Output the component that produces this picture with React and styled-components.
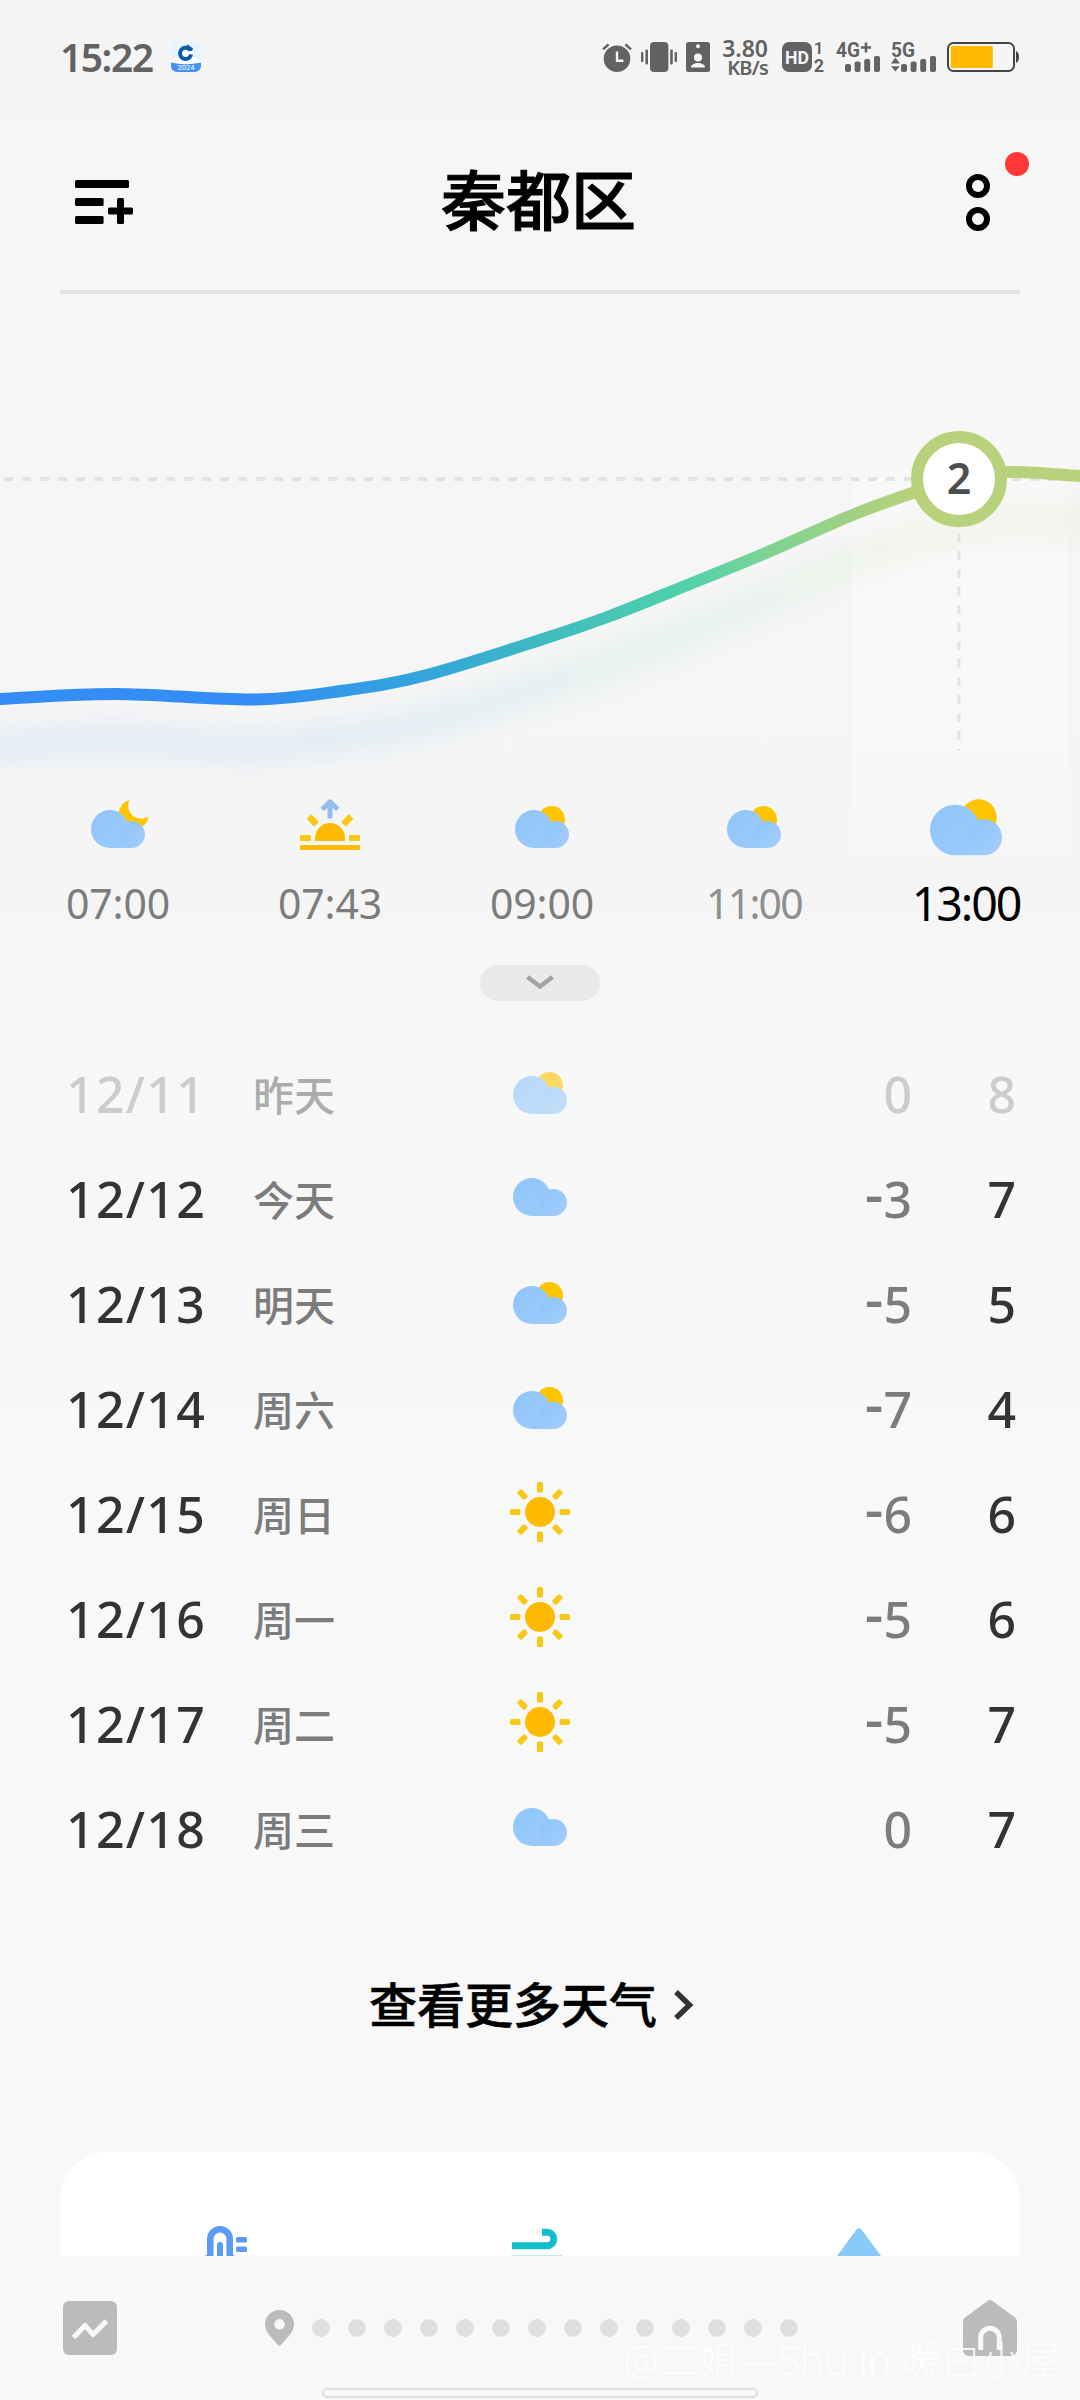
import styled, { createGlobalStyle } from "styled-components";

const hours = [
    { time: '07:00', icon: 'moon' },
    { time: '07:43', icon: 'sunrise' },
    { time: '09:00', icon: 'partly' },
    { time: '11:00', icon: 'partly', dim: true },
    { time: '13:00', icon: 'partly', active: true },
]

const days = [
    { date: '12/11', day: '昨天', icon: 'partly', low: '0', high: '8', past: true },
    { date: '12/12', day: '今天', icon: 'cloud', low: '-3', high: '7' },
    { date: '12/13', day: '明天', icon: 'partly', low: '-5', high: '5' },
    { date: '12/14', day: '周六', icon: 'partly', low: '-7', high: '4' },
    { date: '12/15', day: '周日', icon: 'sun', low: '-6', high: '6' },
    { date: '12/16', day: '周一', icon: 'sun', low: '-5', high: '6' },
    { date: '12/17', day: '周二', icon: 'sun', low: '-5', high: '7' },
    { date: '12/18', day: '周三', icon: 'cloud', low: '0', high: '7' },
]

const curve = [
    [-80, 703], [0, 699], [115, 694], [255, 699.5], [345, 690.5], [425, 675.5], [540, 640], [610, 616],
    [690, 584], [767, 552.5], [850, 516], [914, 492.5], [959, 479], [1007, 472], [1080, 476], [1150, 481],
]

// catmull-rom to bezier
const toPath = (pts) => {
    let d = `M${pts[0][0]} ${pts[0][1]}`;
    for (let i = 0; i < pts.length - 1; i++) {
        const p0 = pts[i - 1] || pts[i];
        const p1 = pts[i];
        const p2 = pts[i + 1];
        const p3 = pts[i + 2] || p2;
        d += `C${p1[0] + (p2[0] - p0[0]) / 6} ${p1[1] + (p2[1] - p0[1]) / 6} ${p2[0] - (p3[0] - p1[0]) / 6} ${p2[1] - (p3[1] - p1[1]) / 6} ${p2[0]} ${p2[1]}`;
    }
    return d;
}

function IconDefs() {
    return (
        <StyledDefs width="0" height="0">
            <defs>
                <linearGradient id="puff" x1="0" y1="0" x2="1" y2="1">
                    <stop offset="0.3" stopColor="#92c7fb" />
                    <stop offset="1" stopColor="#a6cdfb" />
                </linearGradient>
                <linearGradient id="cloudBody" x1="0" y1="0" x2="1" y2="1">
                    <stop offset="0" stopColor="#8fc5fb" />
                    <stop offset="1" stopColor="#9dcbfb" />
                </linearGradient>
            </defs>
        </StyledDefs>
    )
}

function Cloud({ dy = 0 }) {
    return (
        <g transform={`translate(0 ${dy})`}>
            <path d="M22 14a19 19 0 1 0 0 38h21V33L37 22A19 19 0 0 0 22 14z" fill="url(#cloudBody)" />
            <circle cx="43.5" cy="38.5" r="13.5" fill="url(#puff)" />
        </g>
    )
}

function WeatherIcon({ type, size = 60 }) {
    return (
        <StyledIcon width={size} height={size} viewBox="0 0 60 60">
            {type === 'partly' && <circle cx="39.5" cy="23.5" r="13.5" fill="#ffc400" />}
            {type === 'moon' && <path d="M41.5 4A15 15 0 1 0 60.5 20.5A13 13 0 0 1 41.5 4z" fill="#ffc400" />}
            {['partly', 'moon'].includes(type) && <Cloud />}
            {type === 'cloud' && <Cloud dy={-3} />}
            {type === 'sun' && (
                <>
                    <circle cx="30" cy="30" r="15" fill="#ffb900" />
                    {[0, 45, 90, 135, 180, 225, 270, 315].map(deg => (
                        <rect key={deg} x="27" y="0" width="6" height="10.5" rx="1.6" fill="#f5c916" transform={`rotate(${deg} 30 30)`} />
                    ))}
                </>
            )}
            {type === 'sunrise' && (
                <>
                    <path d="M15 45v-3a15 15 0 0 1 30 0v3z" fill="#ffb900" />
                    <rect x="0" y="49" width="60" height="5" rx="1" fill="#fdba0a" />
                    <g fill="#f5c916">
                        <rect x="0" y="39" width="11" height="6" rx="1" />
                        <rect x="49" y="39" width="11" height="6" rx="1" />
                        <rect x="7" y="21" width="11" height="6.6" rx="1" transform="rotate(45 12.5 24.6)" />
                        <rect x="42" y="21" width="11" height="6.6" rx="1" transform="rotate(-45 47.5 24.6)" />
                    </g>
                    <path d="M30 22.5V7M22.200 13.500L30 5.800L37.800 13.500" fill="none" stroke="#94bcec" strokeWidth="5" strokeLinejoin="round" />
                </>
            )}
        </StyledIcon>
    )
}

function StatusBar() {
    return (
        <StyledStatus>
            <Clock>15:22</Clock>
            <svg width="30" height="30" viewBox="0 0 30 30">
                <rect width="30" height="30" rx="6" fill="#e6f4ff" />
                <path d="M0 19Q15 8 30 19V24H0z" fill="#fff" />
                <path d="M0 20.5Q15 24 30 20.5V24a6 6 0 0 1-6 6H6a6 6 0 0 1-6-6z" fill="#4592f0" />
                <circle cx="14.6" cy="11.3" r="5.6" fill="none" stroke="#0a5aa8" strokeWidth="4" />
                <path d="M17.500 9.500L23 8v5l-5-1z" fill="#fff" />
                <path d="M16 3.400l5.500 4.400" stroke="#0a5aa8" strokeWidth="2.400" />
                <path d="M14.600 7.400l3.600 3.800-3.600 3.800-3.600-3.800z" fill="#fff" />
                <text x="15" y="28" fontSize="7.600" textAnchor="middle" fill="#fff" fontFamily="Roboto, sans-serif">2024</text>
            </svg>
            <StatusIcons>
                <svg width="30" height="30" viewBox="0 0 30 30">
                    <circle cx="15" cy="16.700" r="13.300" fill="#626262" />
                    <path d="M1 7.400L6.600 2.400M29 7.400L23.400 2.400" stroke="#626262" strokeWidth="2.600" />
                    <path d="M15 9.500v9.200h6.400" fill="none" stroke="#f5f5f5" strokeWidth="2.400" />
                </svg>
                <svg width="36" height="30" viewBox="0 0 36 30" fill="#626262">
                    <rect x="9" width="18.400" height="30" rx="4" />
                    <rect x="0" y="10" width="2.400" height="10" rx="1" />
                    <rect x="4.400" y="7.500" width="2.600" height="15" rx="1" />
                    <rect x="29.200" y="7.500" width="2.600" height="15" rx="1" />
                    <rect x="33.600" y="10" width="2.400" height="10" rx="1" />
                </svg>
                <svg width="24" height="30" viewBox="0 0 24 30">
                    <rect width="24" height="30" rx="2.500" fill="#626262" />
                    <g fill="#f5f5f5">
                        <circle cx="12" cy="4.300" r="2" />
                        <circle cx="12" cy="15.400" r="4" />
                        <path d="M5 25.400c0-6 14-6 14 0z" />
                    </g>
                </svg>
                <Speed>
                    <SpeedValue>3.80</SpeedValue>
                    <SpeedUnit>KB/s</SpeedUnit>
                </Speed>
                <StatusSvg width="43" height="30" viewBox="0 0 43 30">
                    <rect width="30" height="30" rx="7" fill="#626262" />
                    <text x="3" y="21.600" fontSize="19" fontWeight="700" fill="#f5f5f5" textLength="24" lengthAdjust="spacingAndGlyphs">HD</text>
                    <text x="36.500" y="12" fontSize="17" fontWeight="600" textAnchor="middle" fill="#626262">1</text>
                    <text x="37" y="30" fontSize="18" fontWeight="700" textAnchor="middle" fill="#626262">2</text>
                </StatusSvg>
                <StatusSvg width="44" height="30" viewBox="0 0 44 30" fill="#626262">
                    <text x="0" y="14.600" fontSize="20.500" fontWeight="700" textLength="24" lengthAdjust="spacingAndGlyphs">4G</text>
                    <path d="M25 5.500h10M30 0.500v10" stroke="#626262" strokeWidth="2.600" />
                    <rect x="9" y="22" width="6" height="8" rx="2" />
                    <rect x="18.600" y="19.600" width="6" height="10.400" rx="2" />
                    <rect x="28.200" y="17" width="6" height="13" rx="2" />
                    <rect x="38" y="14" width="6" height="16" rx="2" />
                </StatusSvg>
                <StatusSvg width="45" height="30" viewBox="0 0 45 30" fill="#626262">
                    <text x="0" y="14.600" fontSize="20.500" fontWeight="700" textLength="24" lengthAdjust="spacingAndGlyphs">5G</text>
                    <path d="M4.400 15.600l4.600 6H0zM4.400 29.600l4.400-5.400H0z" />
                    <rect x="10" y="22" width="6" height="8" rx="2" />
                    <rect x="19.600" y="19.600" width="6" height="10.400" rx="2" />
                    <rect x="29.200" y="17" width="6" height="13" rx="2" />
                    <rect x="39" y="14" width="6" height="16" rx="2" />
                </StatusSvg>
                <svg width="72" height="30" viewBox="0 0 72 30">
                    <rect x="1" y="1" width="66" height="28" rx="5.500" fill="none" stroke="#444" strokeWidth="2" />
                    <rect x="3.800" y="4" width="42" height="22" rx="1.500" fill="#ffb900" />
                    <path d="M69 9c4 1.500 4 10.500 0 12z" fill="#444" />
                </svg>
            </StatusIcons>
        </StyledStatus>
    )
}

function Header() {
    return (
        <StyledHeader>
            <svg width="58" height="44" viewBox="0 0 58 44">
                <rect x="0" y="0" width="54" height="8" rx="1.500" />
                <rect x="0" y="18" width="28.600" height="8" rx="1.500" />
                <rect x="0" y="36" width="28.600" height="8" rx="1.500" />
                <rect x="33" y="27.500" width="25" height="7" rx="1.500" />
                <rect x="42" y="18" width="7" height="26" rx="1.500" />
            </svg>
            <Title>秦都区</Title>
            <MenuButton>
                <svg width="24" height="57" viewBox="0 0 24 57" fill="none" stroke="#000" strokeWidth="6">
                    <circle cx="12" cy="12" r="9" />
                    <circle cx="12" cy="45" r="9" />
                </svg>
                <RedDot />
            </MenuButton>
        </StyledHeader>
    )
}

function TempChart() {
    const d = toPath(curve);
    return (
        <StyledChart width="1080" height="496" viewBox="0 294 1080 496">
            <defs>
                <linearGradient id="temp" gradientUnits="userSpaceOnUse" x1="0" y1="0" x2="1080" y2="0">
                    <stop offset="0.24" stopColor="#348df5" />
                    <stop offset="0.315" stopColor="#3399e8" />
                    <stop offset="0.4" stopColor="#33a6da" />
                    <stop offset="0.5" stopColor="#3fbac0" />
                    <stop offset="0.635" stopColor="#50d2aa" />
                    <stop offset="0.71" stopColor="#7dd394" />
                    <stop offset="0.79" stopColor="#a0d182" />
                    <stop offset="0.84" stopColor="#b7d27a" />
                </linearGradient>
                <filter id="soft" filterUnits="userSpaceOnUse" x="-100" y="400" width="1300" height="420">
                    <feGaussianBlur stdDeviation="12" />
                </filter>
            </defs>
            <path d={d} transform="translate(0 47)" fill="none" stroke="url(#temp)" strokeWidth="32" opacity="0.095" filter="url(#soft)" />
            <path d="M4 479H1080" stroke="#e3e3e3" strokeWidth="4" strokeDasharray="9 9" />
            <path d="M959 533V751" stroke="#e3e3e3" strokeWidth="3" strokeDasharray="9 9" />
            <path d={d} fill="none" stroke="url(#temp)" strokeWidth="12" />
            <circle cx="959" cy="479" r="42" fill="#fff" stroke="#b7d27a" strokeWidth="12" />
            <text x="959" y="493.500" fontSize="43" fontWeight="600" textAnchor="middle" fill="#4d4d4d">2</text>
        </StyledChart>
    )
}

function DayRow({ item }) {
    const below = item.low.startsWith('-');
    return (
        <StyledRow>
            <DateText $past={item.past}>{item.date}</DateText>
            <DayText $past={item.past}>{item.day}</DayText>
            <IconCell $past={item.past}><WeatherIcon type={item.icon} /></IconCell>
            <LowText $past={item.past}>
                {below && <Minus>-</Minus>}
                {item.low.replace('-', '')}
            </LowText>
            <HighText $past={item.past}>{item.high}</HighText>
        </StyledRow>
    )
}

function BottomBar() {
    return (
        <StyledBottom>
            <svg width="54" height="54" viewBox="0 0 54 54">
                <rect width="54" height="54" rx="6" fill="#bbb" />
                <path d="M10.500 36.500L22 24.500l8 9L43.500 20" fill="none" stroke="#f8f8f8" strokeWidth="5" strokeLinejoin="round" />
            </svg>
            <Pager>
                <svg width="29" height="36" viewBox="0 0 29 36">
                    <path d="M14.500 0A14.500 14.500 0 0 1 29 14.500C29 23 20 29.500 16 35q-1.500 1.500-3 0C9 29.500 0 23 0 14.500A14.500 14.500 0 0 1 14.500 0z" fill="#bbb" />
                    <circle cx="14.500" cy="14.300" r="5.300" fill="#f8f8f8" />
                </svg>
                {Array.from({ length: 14 }, (_, i) => <PageDot key={i} />)}
            </Pager>
            <HomeIcon width="54" height="56" viewBox="0 0 54 56">
                <path d="M24.500 1q2.500-2 5 0L52 17.500q2 1.500 2 4V50a6 6 0 0 1-6 6H6a6 6 0 0 1-6-6V21.500q0-2.500 2-4z" fill="#bbb" />
                <path d="M17.700 50V37.500a9.300 9.300 0 0 1 18.600 0V50" fill="none" stroke="#f8f8f8" strokeWidth="5" />
            </HomeIcon>
            <Watermark>@二姐—Shu in 暖白小屋</Watermark>
            <GestureBar />
        </StyledBottom>
    )
}

export default function App() {
    return (
        <Page>
            <GlobalStyle />
            <IconDefs />
            <StatusBar />
            <Header />
            <Hourly>
                <Highlight />
                <TempChart />
                <HourList>
                    {hours.map(hour => (
                        <Hour key={hour.time}>
                            <HourIcon><WeatherIcon type={hour.icon} size={hour.active ? 80 : 60} /></HourIcon>
                            <HourLabel $active={hour.active} $dim={hour.dim}>{hour.time}</HourLabel>
                        </Hour>
                    ))}
                </HourList>
            </Hourly>
            <ExpandPill>
                <svg width="28" height="16" viewBox="0 0 28 16">
                    <path d="M1.500 2L14 11.500L26.500 2" fill="none" stroke="#a2a4a3" strokeWidth="4.500" />
                </svg>
            </ExpandPill>
            <DayList>
                {days.map(item => <DayRow key={item.date} item={item} />)}
            </DayList>
            <MoreLink>
                查看更多天气
                <svg width="20" height="32" viewBox="0 0 20 32">
                    <path d="M2 3L15.500 16L2 29" fill="none" stroke="#333" strokeWidth="5.400" />
                </svg>
            </MoreLink>
            <Card>
                <svg width="44" height="30" viewBox="0 0 44 30" fill="#5b9bf5">
                    <path d="M5.300 30V13a9.700 9.700 0 0 1 19.400 0V30" fill="none" stroke="#5b9bf5" strokeWidth="6.600" />
                    <path d="M0 30l3-2h24l3 2zM12 30V19a3 3 0 0 1 6 0v11z" />
                    <path d="M8.600 26h3.400v4H8.600zM18 26h3.400v4H18z" fill="#fff" />
                    <rect x="31" y="11" width="11" height="5.500" rx="1.500" />
                    <rect x="31" y="20.500" width="11" height="5.500" rx="1.500" />
                </svg>
                <WindIcon width="52" height="30" viewBox="0 0 52 30">
                    <path d="M1 19.700H36a6.500 6.500 0 0 0 0-13.500H31" fill="none" stroke="#12bfc9" strokeWidth="7" />
                    <rect x="0" y="29" width="51" height="1" fill="#c3e9eb" />
                </WindIcon>
                <svg width="46" height="30" viewBox="0 0 46 30">
                    <path d="M1 30L20.500 3.500q2.500-3 5 0L45 30z" fill="#88cbfb" />
                </svg>
            </Card>
            <BottomBar />
        </Page>
    )
}

const GlobalStyle = createGlobalStyle`
    body {
        margin: 0;
        background: #f8f8f8;
        font-family: "Noto Sans", "Noto Sans CJK SC", sans-serif;
    }
    * {
        box-sizing: border-box;
    }
    svg {
        display: block;
        flex-shrink: 0;
    }
`

const Page = styled.div`
    position: relative;
    display: flex;
    flex-direction: column;
    width: 1080px;
    height: 2400px;
    overflow: hidden;
    background: linear-gradient(#f4f4f4 0, #f5f5f5 100px, #f5f7f6 240px, #f6f6f6 420px, #f5f5f5 900px, #f6f8f7 1040px, #f7f7f7 1180px, #f7f7f7 1380px, #f7f9f8 1470px, #f8f8f8 1600px);
`

const StyledDefs = styled.svg`
    position: absolute;
`

const StyledIcon = styled.svg`
    overflow: visible;
`

const StyledStatus = styled.div`
    display: flex;
    align-items: center;
    height: 114px;
    padding: 0 61px 0 60px;
`

const Clock = styled.span`
    width: 111px;
    font-size: 39px;
    font-weight: 600;
    line-height: 48px;
    letter-spacing: -1.5px;
    color: #626262;
`

const StatusIcons = styled.div`
    display: flex;
    flex: 1;
    justify-content: flex-end;
    align-items: center;
    & > svg + svg {
        margin-left: 9px;
    }
    & > svg:nth-last-child(-n + 3) {
        margin-left: 11px;
    }
`

const StatusSvg = styled.svg`
    overflow: visible;
    font-family: Roboto, sans-serif;
`

const Speed = styled.div`
    display: flex;
    flex-direction: column;
    align-items: flex-end;
    width: 58px;
    margin-right: 14px;
    color: #626262;
    font-weight: 600;
`

const SpeedValue = styled.span`
    font-size: 23px;
    line-height: 20px;
`

const SpeedUnit = styled.span`
    font-size: 20px;
    line-height: 19px;
    letter-spacing: -0.8px;
`

const StyledHeader = styled.header`
    display: flex;
    align-items: center;
    justify-content: space-between;
    height: 180px;
    margin: 0 60px;
    padding: 0 30px 0 15px;
    border-bottom: 4px solid #e1e3e2;
`

const Title = styled.h1`
    margin: 0 22px 4px 0;
    font-size: 65px;
    font-weight: 500;
    line-height: 80px;
    color: #000;
    -webkit-text-stroke: 1px #000;
`

const MenuButton = styled.div`
    position: relative;
`

const RedDot = styled.span`
    position: absolute;
    top: -22px;
    left: 39px;
    width: 24px;
    height: 24px;
    border-radius: 50%;
    background: #ff3838;
`

const Hourly = styled.section`
    position: relative;
`

/* column behind the selected hour */
const Highlight = styled.div`
    position: absolute;
    top: 68px;
    left: 851px;
    width: 216px;
    height: 493px;
    background: linear-gradient(rgba(255, 255, 255, 0.08), rgba(255, 255, 255, 0.35) 52%, rgba(255, 255, 255, 0.35) 70%, rgba(255, 255, 255, 0.1));
`

const StyledChart = styled.svg`
    position: relative;
`

const HourList = styled.div`
    position: relative;
    display: grid;
    grid-template-columns: repeat(5, 212px);
    padding: 6px 0 0 12px;
`

const Hour = styled.div`
    display: flex;
    flex-direction: column;
    align-items: center;
`

const HourIcon = styled.div`
    display: flex;
    align-items: center;
    justify-content: center;
    height: 60px;
`

const HourLabel = styled.span`
    margin-top: 23px;
    font-size: ${({ $active }) => ($active ? '46.5px' : '41px')};
    line-height: 48px;
    letter-spacing: ${({ $active, $dim }) => ($active ? '-2.1px' : $dim ? '-1.8px' : '-0.2px')};
    color: ${({ $active, $dim }) => ($active ? '#000' : $dim ? '#8f8f8f' : '#7c7c7c')};
`

const ExpandPill = styled.div`
    display: flex;
    align-items: center;
    justify-content: center;
    align-self: center;
    width: 120px;
    height: 36px;
    margin-top: 38px;
    border-radius: 18px;
    background: #e8eae9;
`

const DayList = styled.div`
    margin-top: 41px;
`

const StyledRow = styled.div`
    display: grid;
    grid-template-columns: 187px 257px 60px 1fr 104px;
    align-items: center;
    height: 105px;
    padding: 0 64px 0 66px;
`

const DateText = styled.span`
    margin-top: -2px;
    font-size: 50px;
    font-weight: 500;
    line-height: 60px;
    letter-spacing: 1.3px;
    color: ${({ $past }) => ($past ? '#cbcdcc' : '#333')};
`

const DayText = styled.span`
    font-size: 41px;
    font-weight: 500;
    line-height: 60px;
    color: ${({ $past }) => ($past ? '#abadac' : '#7c7c7c')};
`

const IconCell = styled.span`
    margin-top: -6px;
    opacity: ${({ $past }) => ($past ? 0.6 : 1)};
`

const LowText = styled.span`
    margin-top: -2px;
    height: 60px;
    font-size: 50px;
    font-weight: 500;
    line-height: 60px;
    text-align: right;
    color: ${({ $past }) => ($past ? '#cbcdcc' : '#7c7c7c')};
`

const Minus = styled.span`
    font-size: 58px;
    line-height: 40px;
    vertical-align: 3px;
`

const HighText = styled(LowText)`
    color: ${({ $past }) => ($past ? '#cbcdcc' : '#333')};
`

const MoreLink = styled.div`
    display: flex;
    align-items: center;
    gap: 17px;
    height: 60px;
    margin: 93px 0 0 369px;
    font-size: 48px;
    font-weight: 500;
    line-height: 60px;
    color: #000;
    -webkit-text-stroke: 0.6px #000;
`

const Card = styled.div`
    display: flex;
    justify-content: space-between;
    align-items: flex-end;
    height: 104px;
    margin: 117px 60px 0;
    padding: 0 138px 0 145px;
    border-radius: 48px 48px 0 0;
    background: #fff;
`

const WindIcon = styled.svg`
    margin-right: 11px;
`

const StyledBottom = styled.nav`
    position: relative;
    display: flex;
    align-items: center;
    height: 144px;
    padding: 0 63px;
    background: #f8f8f8;
`

const Pager = styled.div`
    display: flex;
    align-items: center;
    gap: 18px;
    margin-left: 147.5px;
`

const PageDot = styled.span`
    width: 18px;
    height: 18px;
    border-radius: 50%;
    background: #dfdfdf;
`

const HomeIcon = styled.svg`
    margin-left: auto;
`

const Watermark = styled.span`
    position: absolute;
    right: 19px;
    bottom: 12px;
    font-size: 40px;
    font-weight: 300;
    line-height: 56px;
    letter-spacing: -0.1px;
    white-space: nowrap;
    color: rgba(255, 255, 255, 0.85);
`

const GestureBar = styled.span`
    position: absolute;
    left: 322px;
    bottom: 2px;
    width: 436px;
    height: 10px;
    border: 2px solid #dedede;
    border-radius: 5px;
    background: #fafafa;
`
